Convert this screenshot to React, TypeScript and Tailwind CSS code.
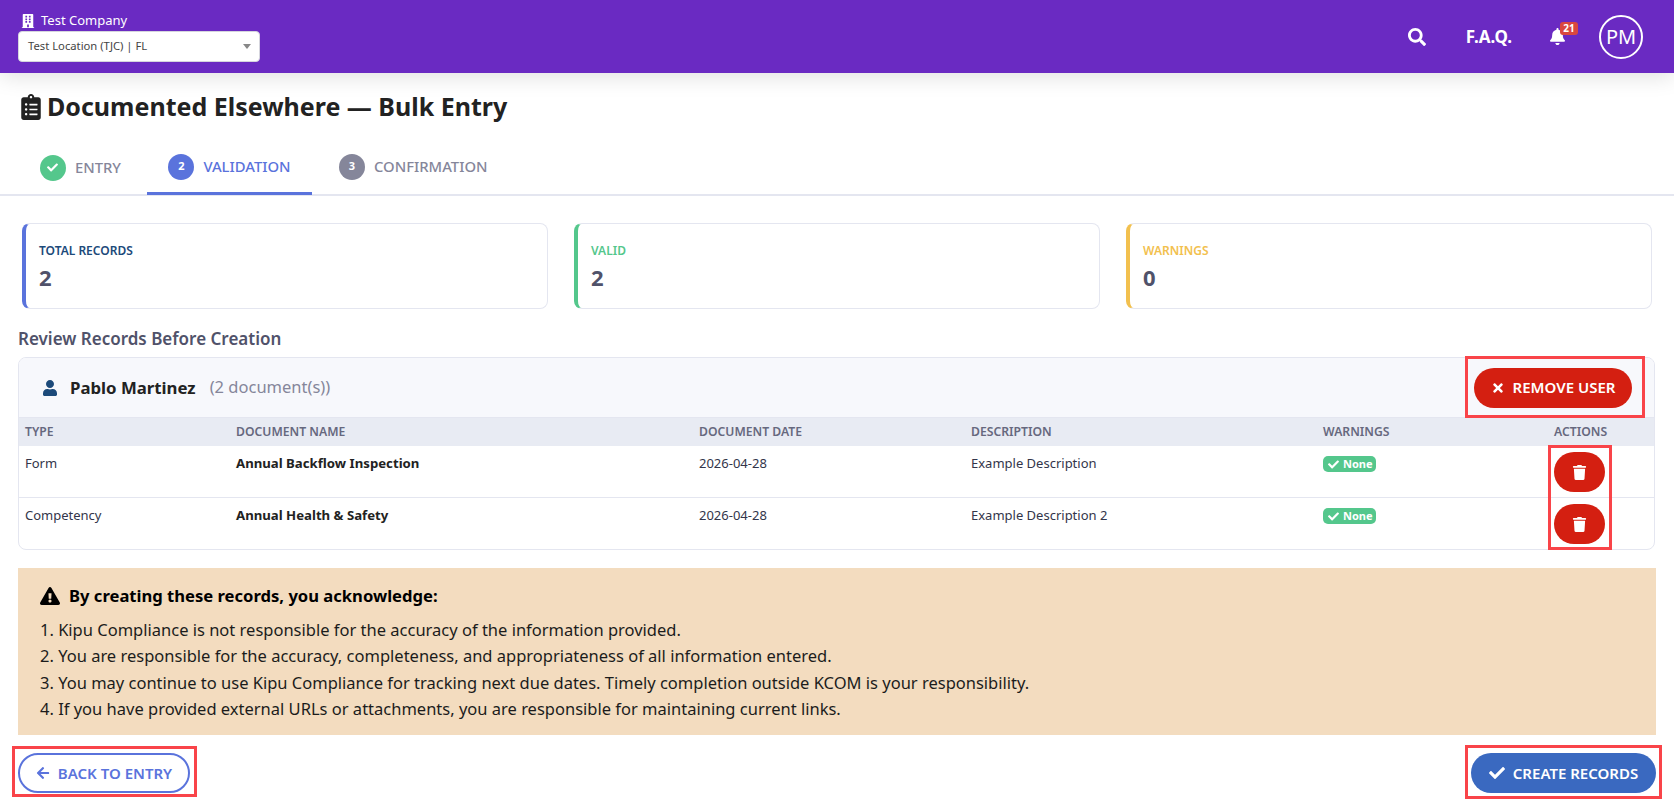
import { FaArrowLeft, FaBell, FaBuilding, FaCheck, FaClipboardList, FaExclamationTriangle, FaSearch, FaTimes, FaTrash, FaUser } from "react-icons/fa";

const font = { fontFamily: '"Noto Sans", sans-serif' };

function StatCard({ label, value, border, color }: { label: string; value: string; border: string; color: string }) {
  return (
    <div className={`h-[86px] w-[526px] rounded-lg border border-[#e4e6f0] border-l-4 ${border} bg-white pl-[13px] pt-[18px]`}>
      <div className={`text-[12px] leading-[18px] font-semibold ${color}`}>{label}</div>
      <div className="mt-[2px] text-[22px] leading-[30px] font-bold text-[#50526a]">{value}</div>
    </div>
  );
}

function Annotation({ className }: { className: string }) {
  return <div className={`pointer-events-none absolute border-[3px] border-[#f94449] ${className}`} />;
}

function TableRow({ type, name, date, description, last }: { type: string; name: string; date: string; description: string; last?: boolean }) {
  return (
    <div className={`grid grid-cols-[211px_463px_272px_352px_1fr] pl-[6px] text-[13px] text-[#33354a] ${last ? "h-[51px]" : "h-[52px] border-b border-[#e4e6f0]"}`}>
      <div className="pt-[8px] leading-[18px]">{type}</div>
      <div className="pt-[8px] text-[13.2px] leading-[18px] font-bold text-[#222]">{name}</div>
      <div className="pt-[8px] leading-[18px]">{date}</div>
      <div className="pt-[8px] leading-[18px]">{description}</div>
      <div className="flex">
        <div className="pt-[10px]">
          <span className="flex h-[16px] w-[53px] items-center gap-[4px] rounded-[5px] bg-[#54c78c] pl-[5px] text-[11px] font-bold text-white">
            <FaCheck className="text-[11px]" /> None
          </span>
        </div>
        <div className="mt-[6px] ml-[178px] flex h-[40px] w-[51px] items-center justify-center rounded-full bg-[#d41f11] text-white">
          <FaTrash className="text-[15px]" />
        </div>
      </div>
    </div>
  );
}

export default function App() {
  return (
    <div style={font} className="relative h-[804px] overflow-hidden bg-white text-[#222]">
      <header className="relative flex h-[73px] items-center justify-between bg-[#6a2ac2] pl-[18px] pr-[31px] text-white shadow-[0_2px_22px_rgba(0,0,0,0.14)]">
        <div className="w-[242px] pt-[1px]">
          <div className="flex h-[18px] items-center gap-[6px] pl-[3px] text-[13px]">
            <FaBuilding className="text-[14px]" />
            Test Company
          </div>
          <div className="mt-[1px] flex h-[31px] items-center justify-between rounded-[4px] border border-[#d5d5dd] bg-white pl-[9px] pr-[8px] text-[11.25px] text-[#444]">
            Test Location (TJC) | FL
            <span className="h-0 w-0 border-x-[4px] border-t-[5px] border-x-transparent border-t-[#888]" />
          </div>
        </div>
        <div className="flex items-center">
          <FaSearch className="text-[18px]" />
          <span className="ml-[40px] text-[17px] font-bold">F.A.Q.</span>
          <div className="relative mr-[33px] ml-[37px]">
            <FaBell className="text-[17px]" />
            <span className="absolute -top-[6px] left-[11px] flex h-[13px] w-[18px] items-center justify-center rounded-[3px] bg-[#d9473f] text-[10px] font-bold">21</span>
          </div>
          <div className="flex h-[44px] w-[44px] items-center justify-center rounded-full border-2 border-white text-[20px]">PM</div>
        </div>
      </header>

      <main>
        <div className="flex h-[68px] items-center gap-[3px] pl-[18px]">
          <FaClipboardList className="text-[26px]" />
          <h1 className="text-[25px] font-bold">Documented Elsewhere — Bulk Entry</h1>
        </div>

        <div className="flex h-[55px] border-b-2 border-[#e4e6f0] pl-[18px] text-[14.8px] font-medium">
          <div className="flex h-[54px] w-[125px] items-center justify-center gap-[9px] border-b-[1px] border-transparent text-[#85869a]">
            <span className="flex h-[26px] w-[26px] items-center justify-center rounded-full bg-[#54c78c] text-[11px] text-white"><FaCheck /></span>
            ENTRY
          </div>
          <div className="ml-[4px] flex h-[54px] w-[165px] items-center justify-center gap-[9px] border-b-[3px] border-[#5a73dc] text-[#5a73dc]">
            <span className="flex h-[26px] w-[26px] items-center justify-center rounded-full bg-[#5a73dc] text-[11px] font-bold text-white">2</span>
            VALIDATION
          </div>
          <div className="ml-[27px] flex h-[54px] items-center gap-[9px] border-b-[3px] border-transparent text-[#85869a]">
            <span className="flex h-[26px] w-[26px] items-center justify-center rounded-full bg-[#85869a] text-[11px] font-bold text-white">3</span>
            CONFIRMATION
          </div>
        </div>

        <div className="mt-[27px] flex gap-[26px] pl-[22px]">
          <StatCard label="TOTAL RECORDS" value="2" border="border-l-[#5a73dc]" color="text-[#1c4a7a]" />
          <StatCard label="VALID" value="2" border="border-l-[#54c78c]" color="text-[#54c78c]" />
          <StatCard label="WARNINGS" value="0" border="border-l-[#f2c04e]" color="text-[#f2c04e]" />
        </div>

        <div className="px-[18px]">
          <h2 className="mt-[18px] text-[17px] leading-[24px] font-semibold text-[#50526a]">Review Records Before Creation</h2>

          <div className="mt-[6px] w-[1637px] overflow-hidden rounded-lg border border-[#e4e6f0]">
            <div className="flex h-[59px] items-center justify-between bg-[#f7f8fc] pr-[22px] pl-[23px]">
              <div className="flex items-center">
                <FaUser className="text-[16px] text-[#1c4a7a]" />
                <span className="ml-[12px] text-[16.8px] font-bold">Pablo Martinez</span>
                <span className="ml-[14px] text-[16.5px] text-[#85869a]">(2 document(s))</span>
              </div>
              <div className="flex h-[40px] w-[158px] items-center justify-center gap-[8px] rounded-full bg-[#d41f11] text-[15px] font-semibold text-white">
                <FaTimes className="text-[14px]" /> REMOVE USER
              </div>
            </div>
            <div className="grid h-[29px] grid-cols-[211px_463px_272px_352px_231px_1fr] items-center border-t border-[#e4e6f0] bg-[#e8ebf3] pl-[6px] text-[12.2px] font-semibold text-[#66687e]">
              <div>TYPE</div>
              <div>DOCUMENT NAME</div>
              <div>DOCUMENT DATE</div>
              <div>DESCRIPTION</div>
              <div>WARNINGS</div>
              <div>ACTIONS</div>
            </div>
            <TableRow type="Form" name="Annual Backflow Inspection" date="2026-04-28" description="Example Description" />
            <TableRow type="Competency" name="Annual Health & Safety" date="2026-04-28" description="Example Description 2" last />
          </div>

          <div className="mt-[18px] h-[167px] w-[1638px] bg-[#f3dcbf] pt-[14px] pl-[22px] text-black">
            <div className="flex h-[28px] items-center gap-[9px] text-[16.6px] font-bold">
              <FaExclamationTriangle className="text-[20px]" />
              By creating these records, you acknowledge:
            </div>
            <div className="mt-[7px] text-[16.5px] leading-[26.4px] text-[#1c1c1c]">
              <div>1. Kipu Compliance is not responsible for the accuracy of the information provided.</div>
              <div>2. You are responsible for the accuracy, completeness, and appropriateness of all information entered.</div>
              <div>3. You may continue to use Kipu Compliance for tracking next due dates. Timely completion outside KCOM is your responsibility.</div>
              <div>4. If you have provided external URLs or attachments, you are responsible for maintaining current links.</div>
            </div>
          </div>

          <div className="mt-[18px] flex w-[1638px] items-center justify-between">
            <div className="flex h-[40px] w-[172px] items-center justify-center gap-[8px] rounded-full border-2 border-[#5a73dc] text-[15px] font-semibold text-[#5a73dc]">
              <FaArrowLeft className="text-[14px]" /> BACK TO ENTRY
            </div>
            <div className="flex h-[40px] w-[185px] items-center justify-center gap-[8px] rounded-full bg-[#3a69c0] text-[15px] font-semibold text-white">
              <FaCheck className="text-[16px]" /> CREATE RECORDS
            </div>
          </div>
        </div>
      </main>

      <Annotation className="top-[356px] left-[1465px] h-[62px] w-[180px]" />
      <Annotation className="top-[445px] left-[1548px] h-[105px] w-[64px]" />
      <Annotation className="top-[746px] left-[12px] h-[51px] w-[185px]" />
      <Annotation className="top-[745px] left-[1465px] h-[54px] w-[197px]" />
    </div>
  );
}
